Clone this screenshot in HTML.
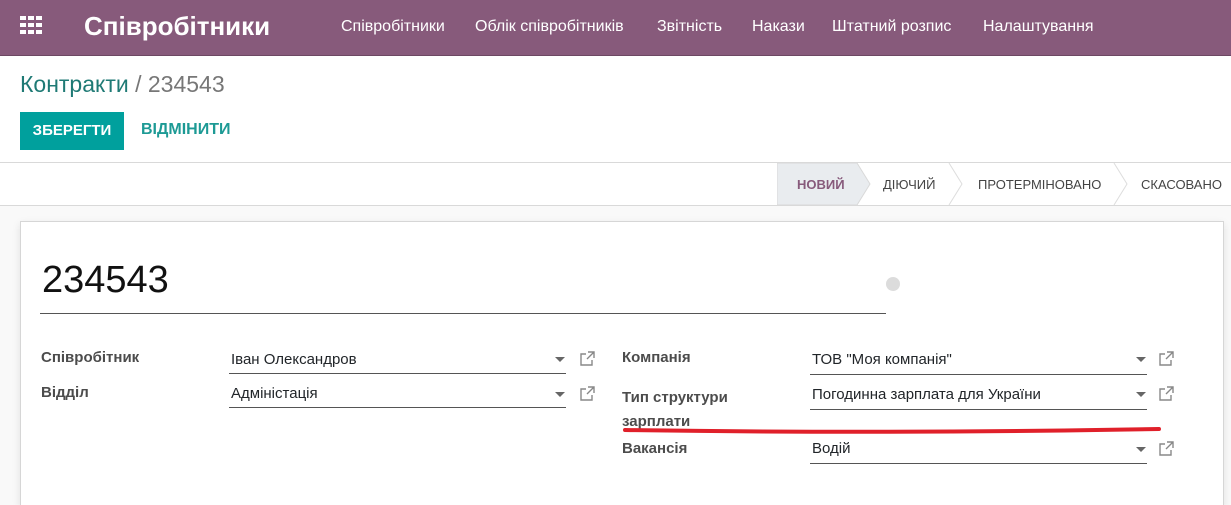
<!DOCTYPE html>
<html><head><meta charset="utf-8"><style>
html,body{margin:0;width:1231px;height:505px;overflow:hidden}
body{font-family:"Liberation Sans",sans-serif;background:#fff;position:relative}
.nav{position:absolute;left:0;top:0;width:1231px;height:55px;background:#875a7b;border-bottom:1px solid #6d4863;color:#fff}
.nav .t{position:absolute;left:84px;top:11px;font-size:26px;font-weight:bold}
.nav .m{position:absolute;top:18px;font-size:16px}
.a{position:absolute;white-space:nowrap}
.ctrl{position:absolute;left:0;top:56px;width:1231px;height:106px;background:#fff;border-bottom:1px solid #d9d9d9}
.sb{position:absolute;left:0;top:163px;width:1231px;height:42px;background:#fff;border-bottom:1px solid #d9d9d9}
.bg{position:absolute;left:0;top:206px;width:1231px;height:299px;background:#f9f9f9}
.sheet{position:absolute;left:20px;top:221px;width:1202px;height:284px;background:#fff;border:1px solid #d6d6d6;border-bottom:none;box-shadow:0 3px 8px rgba(0,0,0,.1)}
.lbl{font-weight:bold;color:#4c4c4c;font-size:15px}
.val{font-size:15px;color:#212529}
.ul{position:absolute;height:1px;background:#555}
.car{position:absolute;width:0;height:0;border-left:5px solid transparent;border-right:5px solid transparent;border-top:5px solid #666}
.st{position:absolute;top:177px;font-size:13px;color:#444}
</style></head><body>
<div class="nav">
<svg class="a" style="left:20px;top:16px" width="22" height="18"><g fill="#fff"><rect x="0" y="0" width="6" height="4"/><rect x="8" y="0" width="6" height="4"/><rect x="16" y="0" width="6" height="4"/><rect x="0" y="7" width="6" height="4"/><rect x="8" y="7" width="6" height="4"/><rect x="16" y="7" width="6" height="4"/><rect x="0" y="14" width="6" height="4"/><rect x="8" y="14" width="6" height="4"/><rect x="16" y="14" width="6" height="4"/></g></svg>
<div class="t">Співробітники</div>
<div class="m a" style="left:341px">Співробітники</div>
<div class="m a" style="left:475px">Облік співробітників</div>
<div class="m a" style="left:657px">Звітність</div>
<div class="m a" style="left:752px">Накази</div>
<div class="m a" style="left:832px">Штатний розпис</div>
<div class="m a" style="left:983px">Налаштування</div>
</div>
<div class="ctrl"></div>
<div class="a" style="left:20px;top:71px;font-size:23px;color:#1f7a75">Контракти <span style="color:#777">/ 234543</span></div>
<div class="a" style="left:20px;top:112px;width:104px;height:38px;background:#00a09d;color:#fff;font-weight:bold;font-size:15px;line-height:38px;text-align:center">ЗБЕРЕГТИ</div>
<div class="a" style="left:141px;top:121px;font-size:16px;font-weight:bold;color:#1d9a95">ВІДМІНИТИ</div>
<div class="sb"></div>
<svg class="a" style="left:777px;top:163px" width="454" height="42"><polygon points="0,0 80,0 93,21 80,42 0,42" fill="#e9ecef" stroke="#d9d9d9"/><polyline points="172,0 185,21 172,42" fill="none" stroke="#ddd"/><polyline points="337,0 350,21 337,42" fill="none" stroke="#ddd"/></svg>
<div class="st" style="left:797px;font-weight:bold;color:#875a7b">НОВИЙ</div>
<div class="st" style="left:883px">ДІЮЧИЙ</div>
<div class="st" style="left:978px">ПРОТЕРМІНОВАНО</div>
<div class="st" style="left:1141px">СКАСОВАНО</div>
<div class="bg"></div>
<div class="sheet"></div>
<div class="a" style="left:42px;top:259px;font-size:38px;color:#111">234543</div>
<div class="ul" style="left:40px;top:313px;width:846px"></div>
<div class="a" style="left:886px;top:277px;width:14px;height:14px;border-radius:50%;background:#dcdcdc"></div>
<div class="a lbl" style="left:41px;top:349px">Співробітник</div>
<div class="a lbl" style="left:41px;top:384px">Відділ</div>
<div class="a val" style="left:231px;top:351px">Іван Олександров</div>
<div class="a val" style="left:231px;top:385px">Адміністація</div>
<div class="ul" style="left:229px;top:373px;width:337px"></div>
<div class="ul" style="left:229px;top:407px;width:337px"></div>
<div class="car" style="left:555px;top:357px"></div><div class="car" style="left:555px;top:392px"></div>
<div class="a lbl" style="left:622px;top:349px">Компанія</div>
<div class="a lbl" style="left:622px;top:386px;line-height:24px">Тип структури<br>зарплати</div>
<div class="a lbl" style="left:622px;top:440px">Вакансія</div>
<div class="a val" style="left:812px;top:351px">ТОВ "Моя компанія"</div>
<div class="a val" style="left:812px;top:386px">Погодинна зарплата для України</div>
<div class="a val" style="left:812px;top:440px">Водій</div>
<div class="ul" style="left:810px;top:374px;width:337px"></div>
<div class="ul" style="left:810px;top:409px;width:337px"></div>
<div class="ul" style="left:810px;top:463px;width:337px"></div>
<div class="car" style="left:1136px;top:357px"></div><div class="car" style="left:1136px;top:392px"></div><div class="car" style="left:1136px;top:447px"></div>
<svg class="a" style="left:0;top:0" width="1231" height="505"><g fill="none" stroke="#888" stroke-width="1.4"><path d="M586 354h-5v11h11v-5M588 352h6v6M594 352l-7 7"/><path d="M586 389h-5v11h11v-5M588 387h6v6M594 387l-7 7"/><path d="M1165 354h-5v11h11v-5M1167 352h6v6M1173 352l-7 7"/><path d="M1165 389h-5v11h11v-5M1167 387h6v6M1173 387l-7 7"/><path d="M1165 444h-5v11h11v-5M1167 442h6v6M1173 442l-7 7"/></g>
<path d="M625 430 Q890 434 1159 429" stroke="#e0202a" stroke-width="4" fill="none" stroke-linecap="round"/></svg>
</body></html>
